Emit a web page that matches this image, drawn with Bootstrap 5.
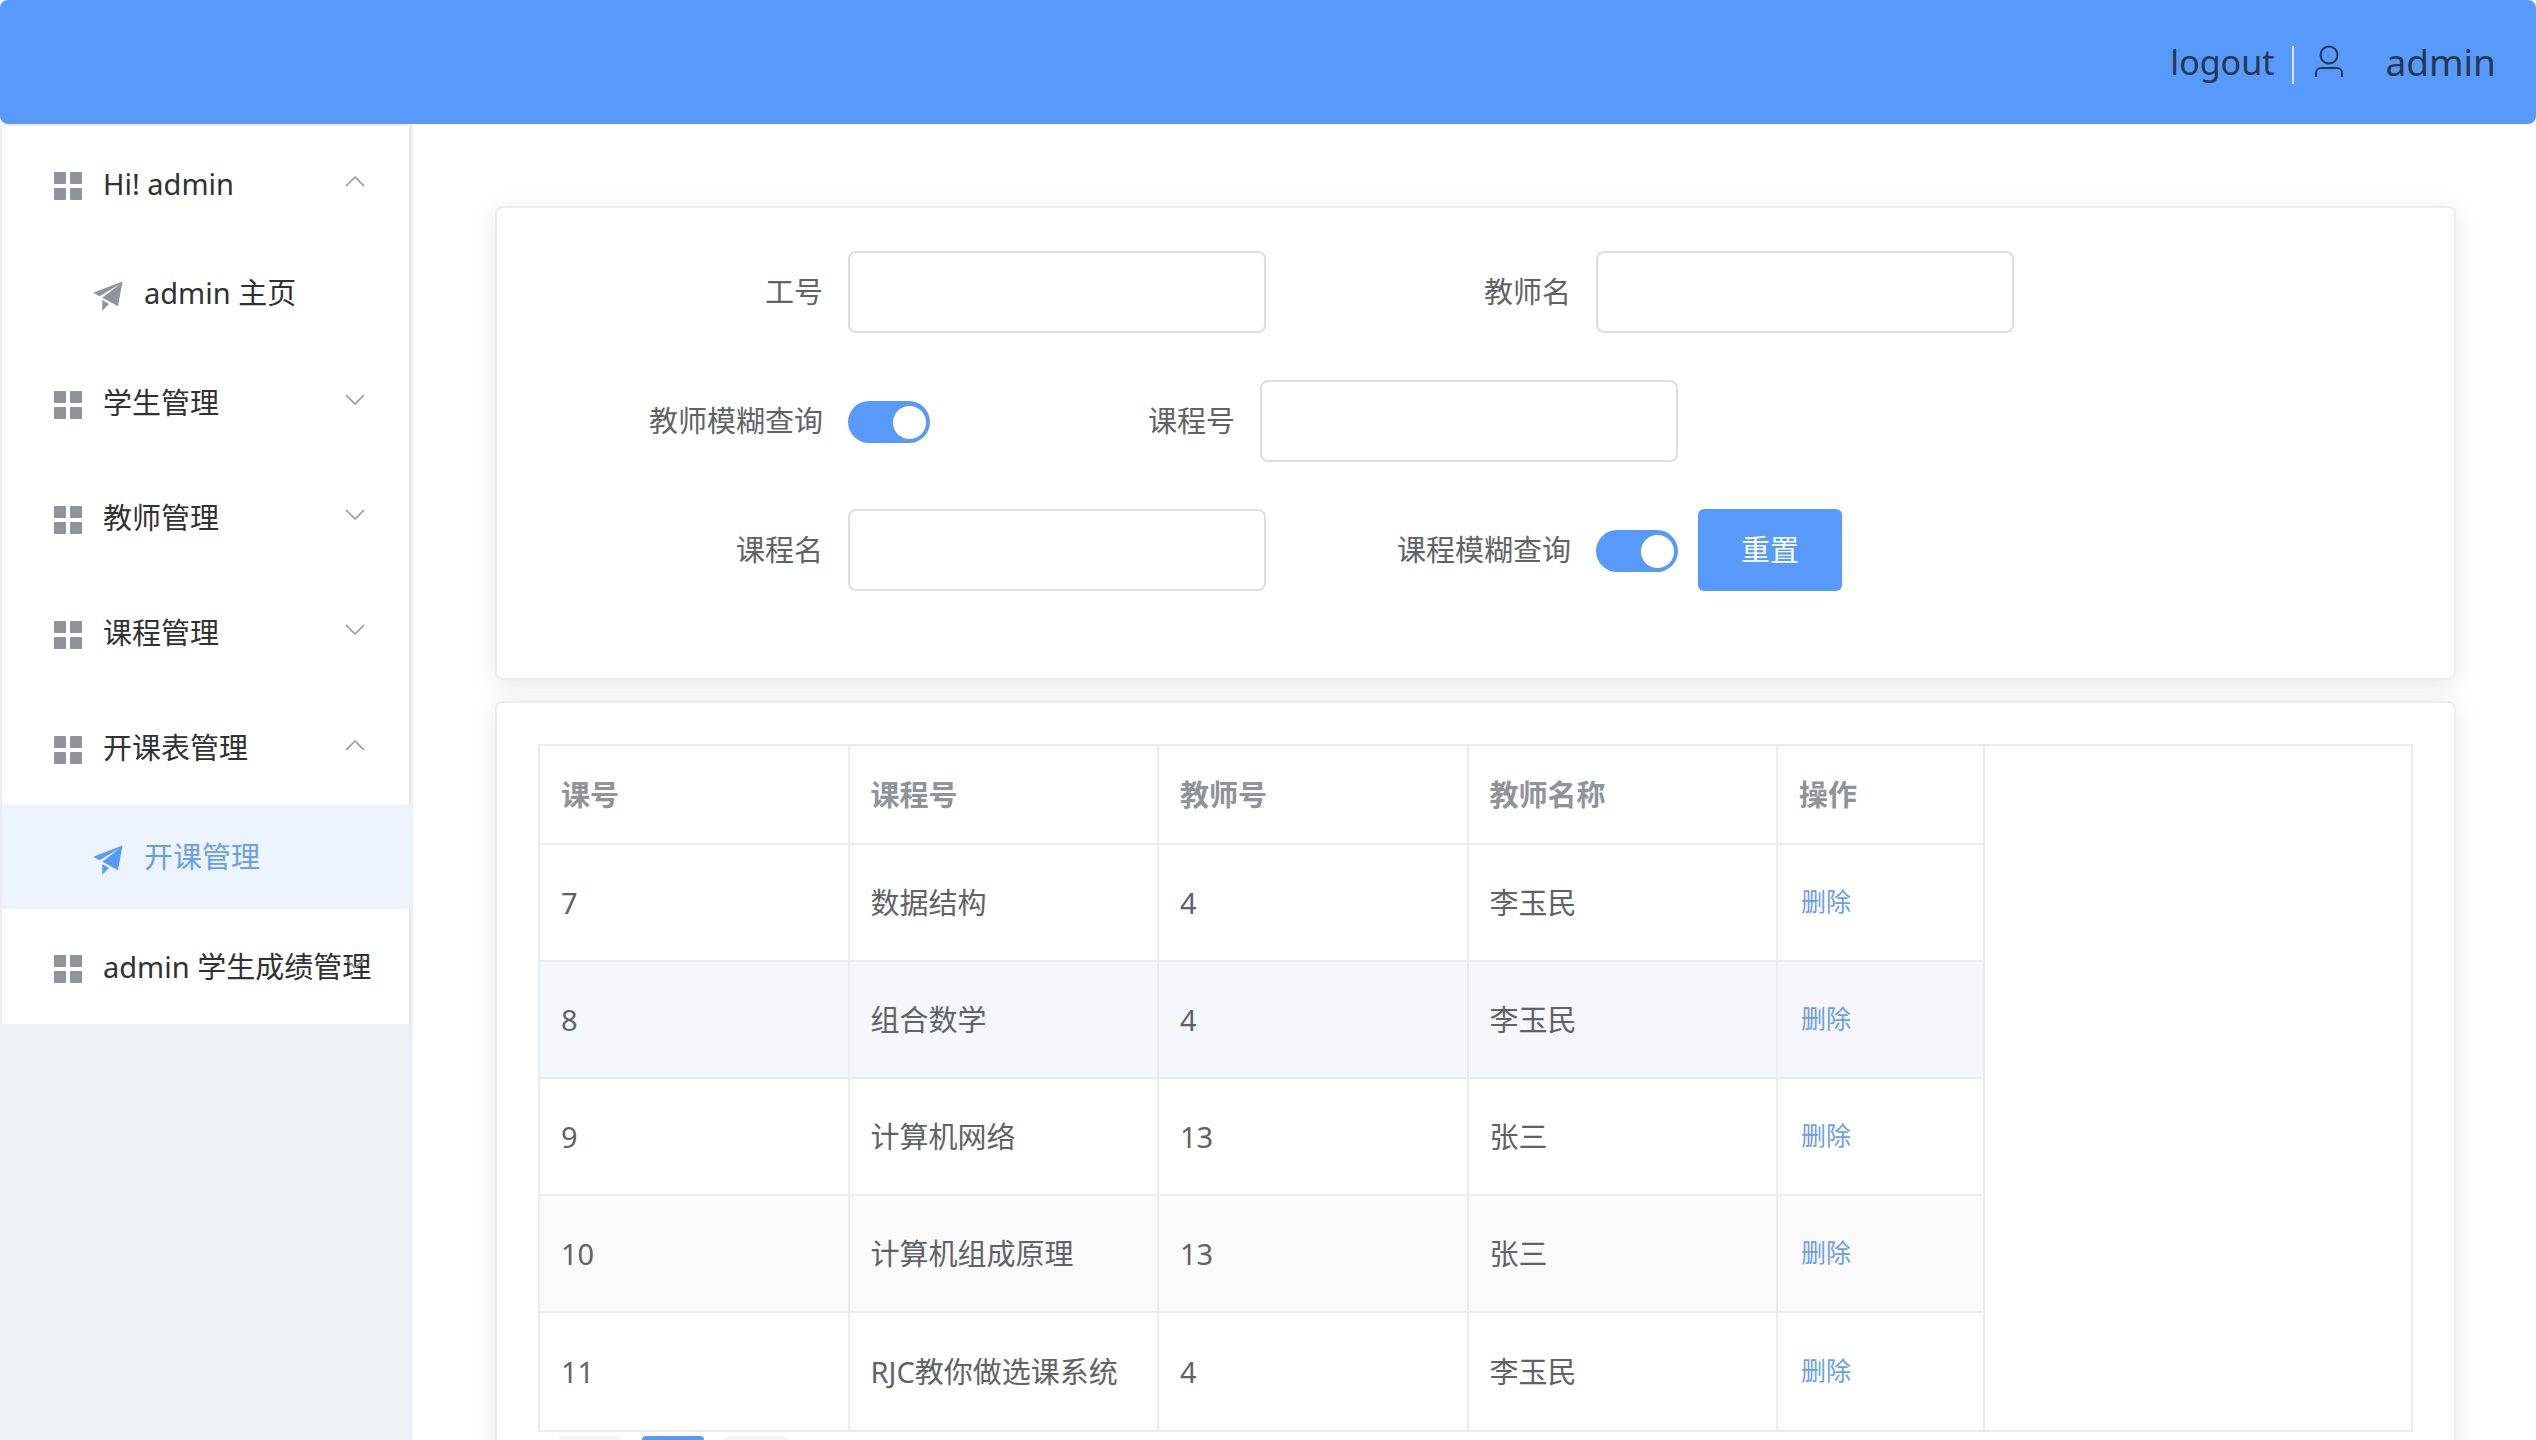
<!DOCTYPE html>
<html lang="zh-CN">
<head>
<meta charset="utf-8">
<meta name="viewport" content="width=device-width, initial-scale=1">
<title>开课管理</title>
<link href="https://cdn.jsdelivr.net/npm/bootstrap@5.3.0/dist/css/bootstrap.min.css" rel="stylesheet">
<style>
  :root { --brand: #579afb; --line: #ebecef; --ink: #303133; --ink-2: #606266; --ink-3: #909399; }
  body { font-family: "Noto Sans", "Noto Sans CJK SC", sans-serif; font-size: 29px; line-height: 40px; color: var(--ink-2); }
  a { text-decoration: none; }

  .topbar { height: 124px; padding: 0 40px; background: var(--brand); border-radius: 8px; color: #26384f; }
  .topbar a { color: inherit; font-size: 34px; }
  .topbar .user-name { font-size: 37px; margin-left: 41px; }
  .split-line { width: 2px; height: 38px; background: #dcdfe6; margin: 6px 20px 0 18px; }

  .side { width: 413px; background: #edf1f5; border-right: 2px solid #f0f1f3; padding-top: 2px; }
  .side-menu { background: #fff; border-left: 2px solid #ececee; border-right: 2px solid #e6e6e8; }
  .side-menu a { position: relative; height: 115px; padding-left: 41px; color: var(--ink); white-space: nowrap; }
  .side-menu .sub-item { height: 104px; padding-left: 82px; }
  .side-menu .sub-item.active { background: #ecf5ff; color: #6a9df0; margin-right: -2px; }
  .side-menu .menu-icon { width: 50px; height: 36px; margin-right: 10px; margin-top: 4px; fill: var(--ink-3); }
  .side-menu .active .menu-icon { fill: var(--brand); }
  .side-menu .arrow { position: absolute; right: 44px; top: 49px; width: 20px; height: 12px; fill: none; stroke: var(--ink-3); stroke-width: 1.5; }

  .content-area { padding: 82px 80px 0 82px; }
  .panel { background: #fff; border: 2px solid var(--line); border-radius: 8px; box-shadow: 0 4px 25px rgba(0, 0, 0, .1); padding: 41px; }
  .panel + .panel { margin-top: 21px; }
  .query-form { gap: 47px; margin: 2px 0 46px; }
  .query-row { gap: 20px; height: 82px; }
  .query-row label { width: 310px; padding-right: 25px; text-align: right; }
  .query-row .form-control { width: 418px; height: 82px; border: 2px solid #dcdfe2; border-radius: 8px; font-size: 29px; }
  .query-row .form-switch { padding: 0; min-height: 0; }
  .query-row .form-check-input { width: 82px; height: 42px; margin: 4px 0 0; float: none; display: block; border: 0; border-radius: 21px; background-size: 41px 41px; background-color: var(--brand);
    background-image: url("data:image/svg+xml,%3csvg xmlns='http://www.w3.org/2000/svg' viewBox='-21 -21 42 42'%3e%3ccircle r='17' fill='%23fff'/%3e%3c/svg%3e") !important; }
  .query-row .btn { width: 144px; height: 82px; border: 0; border-radius: 6px; background: var(--brand); color: #fff; font-size: 29px; }

  .grid-frame { border: 2px solid var(--line); }
  .grid-frame table { width: 1445px; table-layout: fixed; margin: 0; border-collapse: separate; border-spacing: 0; }
  .grid-frame th, .grid-frame td { padding: 0 21px; border-right: 2px solid var(--line); border-bottom: 2px solid var(--line); text-align: left; vertical-align: middle; white-space: nowrap; }
  .grid-frame th { height: 99px; color: var(--ink-3); font-weight: 700; }
  .grid-frame td { height: 117px; }
  .grid-frame tbody tr:last-child td { border-bottom: 0; }
  .grid-frame .striped td { background: #fafafa; }
  .grid-frame .hovered td { background: #f5f7fa; }
  .op-col { width: 207px; }
  .grid-frame .btn-link { padding: 0 1px 4px; font-size: 25px; line-height: 36px; color: #6a9df0; text-decoration: none; display: block; }

  .pager { gap: 21px; padding: 4px 21px 0; }
  .pager .page-link { width: 62px; height: 58px; padding: 0; border: 0; border-radius: 4px; background: #f4f4f5; color: var(--ink); font-size: 27px; text-align: center; }
  .pager .active .page-link { background: var(--brand); color: #fff; }
</style>
<script src="https://cdn.jsdelivr.net/npm/bootstrap@5.3.0/dist/js/bootstrap.bundle.min.js"></script>
</head>
<body class="vh-100 overflow-hidden d-flex flex-column">

<svg class="d-none" xmlns="http://www.w3.org/2000/svg">
  <symbol id="i-grid" viewBox="0 0 36 36"><rect x="4" y="4" width="12" height="12" rx="1"/><rect x="20" y="4" width="12" height="12" rx="1"/><rect x="4" y="20" width="12" height="12" rx="1"/><rect x="20" y="20" width="12" height="12" rx="1"/></symbol>
  <symbol id="i-plane" viewBox="0 0 1024 1024"><path d="M64 448l832-320-128 704-446.080-243.328L832 192 242.816 545.472 64 448zM320 960V657.024L512 768 320 960z"/></symbol>
  <symbol id="i-down" viewBox="0 0 20 12"><path d="M1 1l9 9 9-9"/></symbol>
  <symbol id="i-up" viewBox="0 0 20 12"><path d="M1 11l9-9 9 9"/></symbol>
</svg>

<header class="topbar flex-shrink-0 d-flex align-items-center justify-content-end">
  <a href="#">logout</a>
  <span class="split-line"></span>
  <svg width="30" height="34" viewBox="0 0 30 34" fill="none" stroke="#26384f" stroke-width="2" aria-hidden="true"><circle cx="15" cy="10" r="8.500"/><path d="M2 32v-4a5 5 0 0 1 5-5h16a5 5 0 0 1 5 5v4"/></svg>
  <a href="#" class="user-name">admin</a>
</header>

<div class="d-flex flex-grow-1 overflow-hidden">
  <aside class="side flex-shrink-0">
    <nav class="side-menu">
      <a href="#" class="d-flex align-items-center"><svg class="menu-icon"><use href="#i-grid"/></svg>Hi! admin<svg class="arrow"><use href="#i-up"/></svg></a>
      <a href="#" class="sub-item d-flex align-items-center"><svg class="menu-icon"><use href="#i-plane"/></svg>admin 主页</a>
      <a href="#" class="d-flex align-items-center"><svg class="menu-icon"><use href="#i-grid"/></svg>学生管理<svg class="arrow"><use href="#i-down"/></svg></a>
      <a href="#" class="d-flex align-items-center"><svg class="menu-icon"><use href="#i-grid"/></svg>教师管理<svg class="arrow"><use href="#i-down"/></svg></a>
      <a href="#" class="d-flex align-items-center"><svg class="menu-icon"><use href="#i-grid"/></svg>课程管理<svg class="arrow"><use href="#i-down"/></svg></a>
      <a href="#" class="d-flex align-items-center"><svg class="menu-icon"><use href="#i-grid"/></svg>开课表管理<svg class="arrow"><use href="#i-up"/></svg></a>
      <a href="#" class="sub-item active d-flex align-items-center"><svg class="menu-icon"><use href="#i-plane"/></svg>开课管理</a>
      <a href="#" class="d-flex align-items-center"><svg class="menu-icon"><use href="#i-grid"/></svg>admin 学生成绩管理<svg class="arrow"><use href="#i-down"/></svg></a>
    </nav>
  </aside>

  <main class="content-area flex-grow-1 overflow-hidden">
    <section class="panel">
      <form class="query-form d-flex flex-column">
        <div class="query-row d-flex align-items-center">
          <div class="d-flex align-items-center"><label for="tid">工号</label><input id="tid" type="text" class="form-control"></div>
          <div class="d-flex align-items-center"><label for="tname">教师名</label><input id="tname" type="text" class="form-control"></div>
        </div>
        <div class="query-row d-flex align-items-center">
          <div class="d-flex align-items-center"><label for="tfuzzy">教师模糊查询</label><div class="form-check form-switch"><input id="tfuzzy" class="form-check-input" type="checkbox" role="switch" checked></div></div>
          <div class="d-flex align-items-center"><label for="cid">课程号</label><input id="cid" type="text" class="form-control"></div>
        </div>
        <div class="query-row d-flex align-items-center">
          <div class="d-flex align-items-center"><label for="cname">课程名</label><input id="cname" type="text" class="form-control"></div>
          <div class="d-flex align-items-center"><label for="cfuzzy">课程模糊查询</label><div class="form-check form-switch"><input id="cfuzzy" class="form-check-input" type="checkbox" role="switch" checked></div></div>
          <button type="reset" class="btn">重置</button>
        </div>
      </form>
    </section>

    <section class="panel">
      <div class="grid-frame">
        <table>
          <colgroup><col><col><col><col><col class="op-col"></colgroup>
          <thead><tr><th>课号</th><th>课程号</th><th>教师号</th><th>教师名称</th><th>操作</th></tr></thead>
          <tbody>
            <tr><td>7</td><td>数据结构</td><td>4</td><td>李玉民</td><td><button type="button" class="btn btn-link">删除</button></td></tr>
            <tr class="hovered"><td>8</td><td>组合数学</td><td>4</td><td>李玉民</td><td><button type="button" class="btn btn-link">删除</button></td></tr>
            <tr><td>9</td><td>计算机网络</td><td>13</td><td>张三</td><td><button type="button" class="btn btn-link">删除</button></td></tr>
            <tr class="striped"><td>10</td><td>计算机组成原理</td><td>13</td><td>张三</td><td><button type="button" class="btn btn-link">删除</button></td></tr>
            <tr><td>11</td><td>RJC教你做选课系统</td><td>4</td><td>李玉民</td><td><button type="button" class="btn btn-link">删除</button></td></tr>
          </tbody>
        </table>
      </div>
      <ul class="pager d-flex list-unstyled mb-0">
        <li><button type="button" class="page-link" aria-label="上一页"></button></li>
        <li class="active"><button type="button" class="page-link" aria-label="第 1 页"></button></li>
        <li><button type="button" class="page-link" aria-label="下一页"></button></li>
      </ul>
    </section>
  </main>
</div>
</body>
</html>
